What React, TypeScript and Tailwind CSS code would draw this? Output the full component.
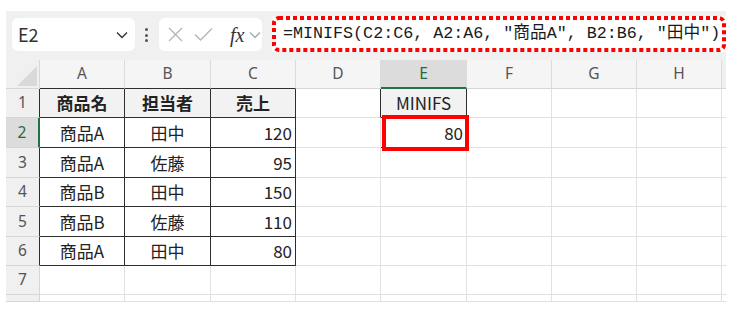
import React from "react";

const COLS = ["A", "B", "C", "D", "E", "F", "G", "H"];

type Cell = { v: string; align?: "center" | "right"; bold?: boolean };

const ROWS: (Cell | null)[][] = [
  [{ v: "商品名", align: "center", bold: true }, { v: "担当者", align: "center", bold: true }, { v: "売上", align: "center", bold: true }, null, { v: "MINIFS", align: "center" }],
  [{ v: "商品A", align: "center" }, { v: "田中", align: "center" }, { v: "120", align: "right" }, null, { v: "80", align: "right" }],
  [{ v: "商品A", align: "center" }, { v: "佐藤", align: "center" }, { v: "95", align: "right" }],
  [{ v: "商品B", align: "center" }, { v: "田中", align: "center" }, { v: "150", align: "right" }],
  [{ v: "商品B", align: "center" }, { v: "佐藤", align: "center" }, { v: "110", align: "right" }],
  [{ v: "商品A", align: "center" }, { v: "田中", align: "center" }, { v: "80", align: "right" }],
  [],
  [],
];

const cellFont = { fontFamily: '"Noto Sans CJK JP", "Noto Sans", sans-serif' };

const Chevron = ({ className }: { className?: string }) => (
  <svg width="12" height="8" viewBox="0 0 12 8" className={className}>
    <path d="M1 1.5 L6 6.5 L11 1.5" fill="none" stroke="currentColor" strokeWidth="1.4" />
  </svg>
);

const FormulaBar = () => (
  <div className="flex h-[49px] w-[720px] items-start bg-[#f0f0f0]">
    {/* Name box */}
    <div className="ml-[6px] mt-[7px] flex h-[33px] w-[123px] items-center justify-between rounded-md bg-white pl-[6px] pr-[7px]">
      <span className="text-[18px] text-[#333]" style={cellFont}>E2</span>
      <Chevron className="text-[#333]" />
    </div>
    {/* more dots */}
    <div className="ml-[10px] mt-[17px] flex h-[14px] w-[3px] flex-col justify-between">
      <span className="h-[3px] w-[3px] rounded-full bg-[#555]" />
      <span className="h-[3px] w-[3px] rounded-full bg-[#555]" />
      <span className="h-[3px] w-[3px] rounded-full bg-[#555]" />
    </div>
    {/* fx box */}
    <div className="ml-[11px] mt-[7px] flex h-[33px] w-[103px] items-center rounded-md bg-white pl-[9px]">
      <svg width="15" height="15" viewBox="0 0 15 15">
        <path d="M1 1 L14 14 M14 1 L1 14" stroke="#b4b4b4" strokeWidth="1.3" fill="none" />
      </svg>
      <svg width="19" height="15" viewBox="0 0 19 15" className="ml-[11px]">
        <path d="M1 7.5 L6.5 13 L18 1.5" stroke="#b4b4b4" strokeWidth="1.3" fill="none" />
      </svg>
      <span className="ml-[17px] text-[20px] italic leading-none text-[#333]" style={{ fontFamily: '"Liberation Serif", "DejaVu Serif", serif' }}>fx</span>
      <Chevron className="ml-[5px] text-[#aaa]" />
    </div>
    {/* formula */}
    <div className="relative ml-[10px] mt-[5px] flex h-[36px] w-[454px] shrink-0 items-center bg-white pl-[11px]">
      <svg className="absolute left-0 top-0" width="454" height="36" viewBox="0 0 454 36">
        <rect x="2" y="2" width="450" height="32" rx="5" fill="none" stroke="#ff0000" strokeWidth="4" strokeDasharray="4 3" />
      </svg>
      <span className="whitespace-pre text-[16.7px] text-[#1a1a1a]" style={{ fontFamily: '"Liberation Mono", "Noto Sans CJK JP", monospace' }}>
        =MINIFS(C2:C6, A2:A6, "商品A", B2:B6, "田中")
      </span>
    </div>
  </div>
);

const Sheet = () => {
  const dark = "border-[#2e2e2e]";
  const light = "border-[#e1e1e1]";
  return (
    <div className="grid w-[720px] grid-cols-[34px_85px_86px_85px_85px_86px_85px_85px_85px_4px] grid-rows-[29px_29px_30px_30px_29px_30px_29px_29px_7px]">
      {/* corner */}
      <div className="flex items-end justify-end border-b border-r border-[#d6d6d6] bg-[#f0f0f0] p-[2px]">
        <div className="h-0 w-0 border-b-[20px] border-l-[20px] border-b-[#d9d9d9] border-l-transparent" />
      </div>
      {COLS.map((c, i) => {
        const sel = c === "E";
        const bottom = sel ? "border-b-2 border-b-[#217346]" : i < 3 ? "border-b border-b-[#2e2e2e]" : "border-b border-b-[#d6d6d6]";
        return (
          <div
            key={c}
            className={`flex items-center justify-center border-r border-r-[#dcdcdc] text-[15.5px] ${bottom} ${sel ? "bg-[#dcdcdc] text-[#1d6b40]" : "bg-[#f5f5f5] text-[#555]"}`}
            style={{ fontFamily: '"Noto Sans", sans-serif' }}
          >
            {c}
          </div>
        );
      })}
      <div className="border-b border-[#d6d6d6] bg-[#f0f0f0]" />

      {ROWS.map((row, r) => {
        const rowNo = r + 1;
        const inTable = rowNo <= 6;
        const selRow = rowNo === 2;
        return (
          <React.Fragment key={r}>
            <div
              className={`flex items-center justify-center border-b border-b-[#d6d6d6] text-[15.5px] ${
                selRow ? "border-r-2 border-r-[#217346] bg-[#dcdcdc] text-[#1d6b40]" : inTable ? "border-r border-r-[#2e2e2e] bg-[#f0f0f0] text-[#555]" : "border-r border-r-[#d6d6d6] bg-[#f0f0f0] text-[#555]"
              }`}
              style={{ fontFamily: '"Noto Sans", sans-serif' }}
            >
              {rowNo < 8 ? rowNo : ""}
            </div>
            {COLS.map((c, ci) => {
              const cell = row[ci] ?? null;
              const tableCell = inTable && ci < 3;
              const e1 = rowNo === 1 && c === "E";
              const d1 = rowNo === 1 && c === "D";
              const e2 = rowNo === 2 && c === "E";
              const right = tableCell || e1 || d1 || e2 ? `border-r ${dark}` : `border-r ${light}`;
              const bottom = tableCell || e1 || e2 ? "border-b border-b-[#2e2e2e]" : "border-b border-b-[#e1e1e1]";
              const bg = (rowNo === 1 && ci < 3) || e1 ? "bg-[#f2f2f2]" : "bg-white";
              return (
                <div
                  key={c}
                  className={`relative flex items-center ${right} ${bottom} ${bg} ${
                    cell?.align === "right" ? "justify-end pr-[3px]" : "justify-center"
                  } text-[17px] text-[#222] ${cell?.bold ? "font-bold text-[#111]" : ""}`}
                  style={cellFont}
                >
                  {cell?.v}
                  {e2 && <div className="absolute -top-[3px] left-px z-10 h-[36px] w-[87px] border-4 border-[#ff0000]" />}
                </div>
              );
            })}
            <div className="border-b border-[#e1e1e1] bg-white" />
          </React.Fragment>
        );
      })}
    </div>
  );
};

export default function App() {
  return (
    <div className="h-[311px] w-[738px] overflow-hidden bg-white pl-[6px] pt-[11px]">
      <FormulaBar />
      <Sheet />
    </div>
  );
}
